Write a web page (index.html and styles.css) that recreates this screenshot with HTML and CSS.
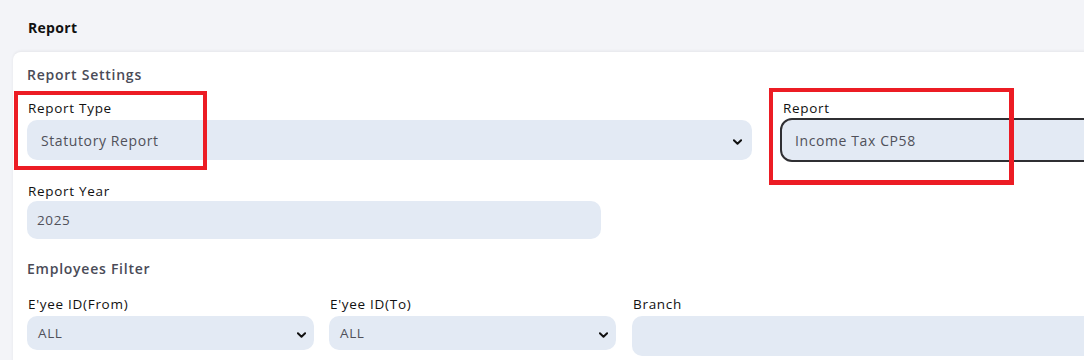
FILE: index.html
```html
<!DOCTYPE html>
<html lang="en">
<head>
  <meta charset="UTF-8" />
  <title>Report</title>
  <link rel="stylesheet" href="styles.css">
</head>
<body>
  <div class="page-title">Report</div>

  <div class="card">
    <div class="section-title">Report Settings</div>

    <div class="row-two">
      <div class="field">
        <label>Report Type</label>
        <div class="select select-lg">
          <span>Statutory Report</span>
          <svg class="chevron" viewBox="0 0 10 6"><path d="M1 1l4 4 4-4" /></svg>
        </div>
      </div>
      <div class="field">
        <label>Report</label>
        <div class="input input-focus">Income Tax CP58</div>
      </div>
    </div>

    <div class="field field-year">
      <label>Report Year</label>
      <div class="input input-sm">2025</div>
    </div>

    <div class="section-title section-gap">Employees Filter</div>

    <div class="row-three">
      <div class="field">
        <label>E'yee ID(From)</label>
        <div class="select select-sm">
          <span>ALL</span>
          <svg class="chevron" viewBox="0 0 10 6"><path d="M1 1l4 4 4-4" /></svg>
        </div>
      </div>
      <div class="field">
        <label>E'yee ID(To)</label>
        <div class="select select-sm">
          <span>ALL</span>
          <svg class="chevron" viewBox="0 0 10 6"><path d="M1 1l4 4 4-4" /></svg>
        </div>
      </div>
      <div class="field">
        <label>Branch</label>
        <div class="select select-branch"></div>
      </div>
    </div>
  </div>

  <!-- annotation boxes drawn over the form -->
  <div class="mark mark-type"></div>
  <div class="mark mark-report"></div>
</body>
</html>
```

FILE: styles.css
```css
:root {
  --page-bg: #f3f4f8;
  --field-bg: #e3eaf4;
  --field-text: #50515a;
  --title-text: #4a4b57;
  --mark: #ec1c24;
}

body {
  margin: 0;
  background: var(--page-bg);
  font-family: "Open Sans", "Liberation Sans", sans-serif;
  color: #111;
  overflow: hidden;
  position: relative;
  letter-spacing: 0.6px;
}

.page-title {
  padding: 19px 28px 0;
  font-size: 14px;
  font-weight: 700;
  line-height: 18px;
  letter-spacing: 0.3px;
}

.card {
  margin: 15px 0 0 13px;
  width: 1560px;
  height: 400px;
  background: #fff;
  border-radius: 8px 0 0 0;
  box-shadow: 0 -1px 3px rgba(0, 0, 0, 0.06);
  padding: 14px 0 0 14px;
}

.section-title {
  font-size: 14px;
  font-weight: 600;
  line-height: 18px;
  color: var(--title-text);
  letter-spacing: 0.75px;
}

.section-gap {
  margin-top: 21px;
}

.field label {
  display: block;
  font-size: 13.5px;
  line-height: 18px;
  margin-bottom: 3px;
  padding-left: 1px;
  letter-spacing: 0.7px;
}

.row-two {
  display: grid;
  grid-template-columns: 725px 725px;
  gap: 30px;
  margin-top: 15px;
}

.row-three {
  display: grid;
  grid-template-columns: 287px 287px 700px;
  gap: 15px;
  margin-top: 17px;
}

.row-three .field:last-child {
  margin-left: 1px;
}

.select,
.input {
  background: var(--field-bg);
  border-radius: 10px;
  color: var(--field-text);
  display: flex;
  align-items: center;
  box-sizing: border-box;
}

.select {
  justify-content: space-between;
}

.select-lg {
  height: 40px;
  padding: 0 10px 0 14px;
  font-size: 14px;
}

.select-sm {
  height: 34px;
  padding: 0 8px 0 11px;
  font-size: 13.5px;
}

.select-branch {
  height: 40px;
}

.input {
  height: 40px;
  padding: 0 13px;
  font-size: 14px;
}

.input-focus {
  outline: 2px solid #2f2f33;
  margin-top: 1px;
}

.input-sm {
  height: 38px;
  padding: 0 10px;
  font-size: 13.5px;
}

.field-year {
  width: 574px;
  margin-top: 22px;
}

.field-year label {
  margin-bottom: 1px;
}

.chevron {
  width: 9px;
  height: 6px;
  margin-top: 3px;
  fill: none;
  stroke: #111;
  stroke-width: 2.2;
  stroke-linecap: round;
  stroke-linejoin: round;
}

.mark {
  position: absolute;
  border: 4px solid var(--mark);
  box-sizing: border-box;
}

.mark-type {
  left: 14px;
  top: 91px;
  width: 193px;
  height: 79px;
}

.mark-report {
  left: 769px;
  top: 88px;
  width: 245px;
  height: 97px;
  border-width: 4px 5px 5px 4px;
}
```
